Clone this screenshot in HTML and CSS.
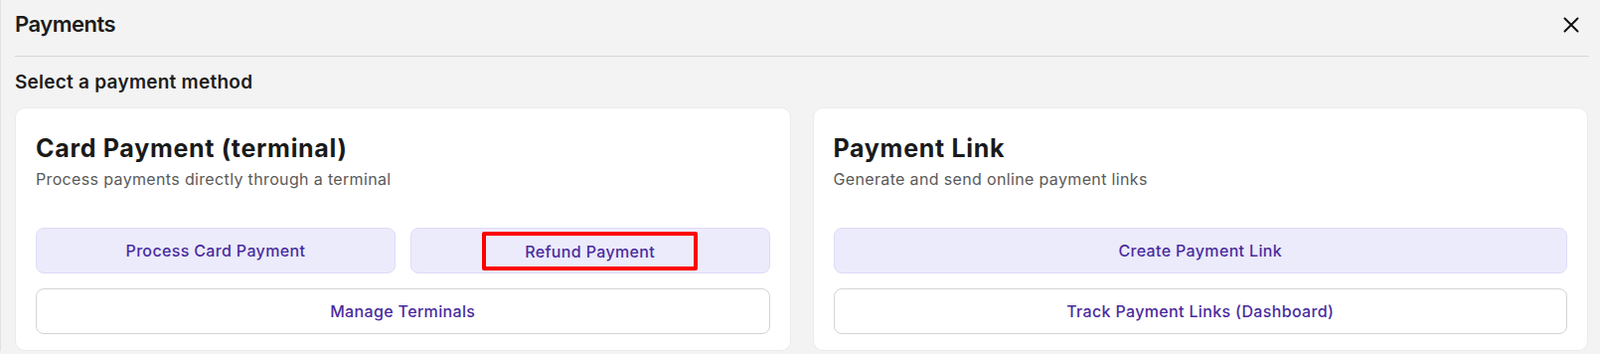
FILE: index.html
```html
<!DOCTYPE html>
<html lang="en">
<head>
<meta charset="utf-8">
<title>Payments</title>
<link rel="stylesheet" href="styles.css">
</head>
<body>
<div class="modal">
  <header class="modal-header">
    <h1 class="modal-title">Payments</h1>
    <button class="close-btn" aria-label="Close">
      <svg width="16" height="16" viewBox="0 0 16 16"><path d="M1.5 1.5 L14.5 14.5 M14.5 1.5 L1.5 14.5" stroke="#111" stroke-width="2" stroke-linecap="round" fill="none"/></svg>
    </button>
  </header>
  <h2 class="section-label">Select a payment method</h2>
  <div class="methods">
    <section class="card">
      <h3 class="card-title">Card Payment (terminal)</h3>
      <p class="card-desc">Process payments directly through a terminal</p>
      <div class="actions">
        <div class="row two">
          <button class="btn btn-soft">Process Card Payment</button>
          <button class="btn btn-soft"><span class="highlight">Refund Payment</span></button>
        </div>
        <button class="btn btn-outline">Manage Terminals</button>
      </div>
    </section>
    <section class="card">
      <h3 class="card-title">Payment Link</h3>
      <p class="card-desc">Generate and send online payment links</p>
      <div class="actions">
        <button class="btn btn-soft">Create Payment Link</button>
        <button class="btn btn-outline">Track Payment Links (Dashboard)</button>
      </div>
    </section>
  </div>
</div>
</body>
</html>
```
FILE: styles.css
```css
* { box-sizing: border-box; }
html, body { margin: 0; padding: 0; }
body {
  background: #f3f3f3;
  font-family: "Inter", "Noto Sans", sans-serif;
  color: #1c1c1c;
  height: 356px;
  overflow: hidden;
}
.modal {
  padding: 0 11px 0 14px;
  border-left: 1px solid #e2e2e2;
}
.modal-header {
  display: flex;
  align-items: flex-start;
  justify-content: space-between;
  height: 57px;
  padding-top: 12px;
  border-bottom: 1px solid #d6d6d6;
}
.modal-title {
  margin: 0;
  font-size: 22px;
  line-height: 25px;
  font-weight: 600;
  color: #1c1c1c;
  letter-spacing: -0.5px;
}
.close-btn {
  border: 0;
  background: none;
  padding: 0;
  margin-right: 10px;
  width: 16px;
  height: 25px;
  display: flex;
  align-items: center;
  cursor: pointer;
}
.section-label {
  margin: 14px 0 0;
  font-size: 19px;
  font-weight: 600;
  line-height: 24px;
  color: #1c1c1c;
  letter-spacing: 0.25px;
}
.methods {
  display: grid;
  grid-template-columns: 1fr 1fr;
  gap: 22px;
  margin-top: 13px;
  padding-right: 1px;
}
.card {
  background: #fff;
  border: 1px solid #ebebeb;
  border-radius: 10px;
  padding: 25px 20px 16px;
}
.card-title {
  margin: 0;
  font-size: 25px;
  font-weight: 700;
  line-height: 30px;
  color: #1a1a1a;
  letter-spacing: 0.7px;
}
.card-desc {
  margin: 6px 0 0;
  font-size: 16px;
  line-height: 20px;
  color: #5a5a5a;
  letter-spacing: 0.35px;
}
.actions {
  margin-top: 39px;
  display: flex;
  flex-direction: column;
  gap: 15px;
}
.row.two {
  display: grid;
  grid-template-columns: 1fr 1fr;
  gap: 15px;
}
.btn {
  height: 46px;
  border-radius: 8px;
  font-family: inherit;
  font-size: 16px;
  font-weight: 500;
  letter-spacing: 0.35px;
  color: #4a2b9e;
  display: flex;
  align-items: center;
  justify-content: center;
  padding: 0;
}
.btn-soft {
  background: #ecebfc;
  border: 1px solid #dedaf8;
}
.btn-outline {
  background: #fff;
  border: 1px solid #d4d4d4;
}
.highlight {
  display: inline-flex;
  align-items: center;
  justify-content: center;
  width: 217px;
  height: 39px;
  margin-top: 1px;
  border: 4px solid #ff0000;
  border-radius: 2px;
}
```
